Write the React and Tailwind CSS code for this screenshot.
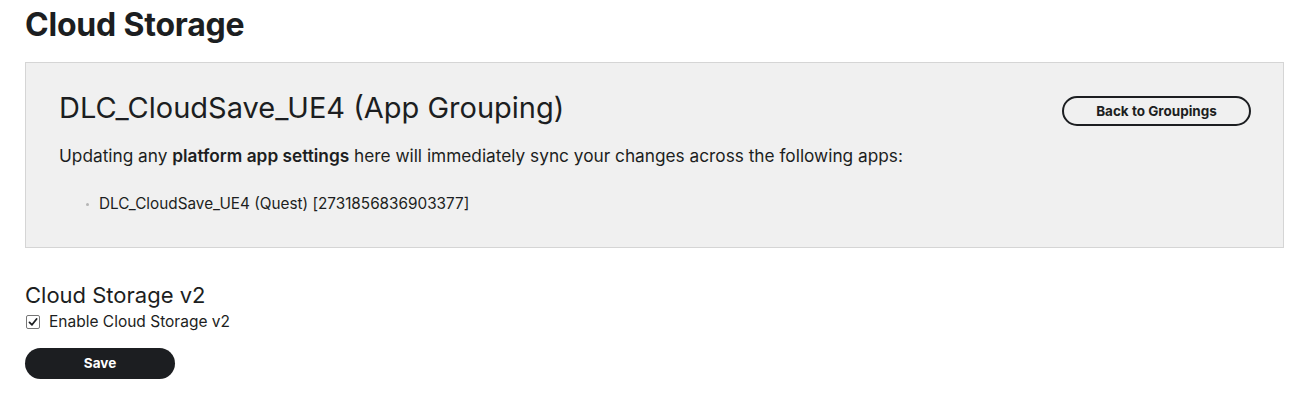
import React, { useState } from 'react';

const font = { fontFamily: 'Inter, "Noto Sans", sans-serif' };

export default function App() {
    const [enabled, setEnabled] = useState(true);

    return (
        <div className="min-h-screen bg-white text-[#1c1e21] pl-[25px] pr-[19px] pt-[5px]" style={font}>
            <h1 className="text-[32px] leading-[40px] font-bold tracking-[-0.2px]">Cloud Storage</h1>

            <div className="mt-[17px] bg-[#f0f0f0] border border-[#d5d5d5] pl-[33px] pr-[32px] pt-[27px] pb-[33px]">
                <div className="flex items-start justify-between">
                    <h2 className="text-[29px] leading-[36px] font-normal">DLC_CloudSave_UE4 (App Grouping)</h2>
                    <button className="mt-[6px] h-[30px] w-[189px] rounded-full border-2 border-[#1c1e21] text-[13.5px] font-bold">
                        Back to Groupings
                    </button>
                </div>
                <p className="mt-[18px] text-[17.25px] leading-[24px]">
                    Updating any <span className="font-semibold">platform app settings</span> here will immediately sync your changes across the following apps:
                </p>
                <ul className="mt-[26px] pl-[27px] text-[15.3px] leading-[20px]">
                    <li className="flex items-center gap-[10px]">
                        <span className="w-[3px] h-[3px] rounded-full bg-[#b5b5b5]" />
                        <span>DLC_CloudSave_UE4 (Quest) [2731856836903377]</span>
                    </li>
                </ul>
            </div>

            <h3 className="mt-[33px] text-[22px] leading-[28px] font-normal">Cloud Storage v2</h3>
            <label className="mt-[3px] flex items-center gap-[9px] text-[15.5px] leading-[20px]">
                <span
                    onClick={() => setEnabled(!enabled)}
                    className="ml-[1px] w-[14px] h-[14px] border border-[#767676] rounded-[2px] bg-white flex items-center justify-center"
                >
                    {enabled && (
                        <svg width="10" height="10" viewBox="0 0 10 10" fill="none" stroke="#1c1e21" strokeWidth="1.8" strokeLinecap="round" strokeLinejoin="round">
                            <polyline points="1.5 5.4 4 7.8 8.6 2" />
                        </svg>
                    )}
                </span>
                <span>Enable Cloud Storage v2</span>
            </label>
            <button className="mt-[16px] h-[31px] w-[150px] rounded-full bg-[#1c1e21] text-white text-[13.5px] font-bold">
                Save
            </button>
        </div>
    );
}
